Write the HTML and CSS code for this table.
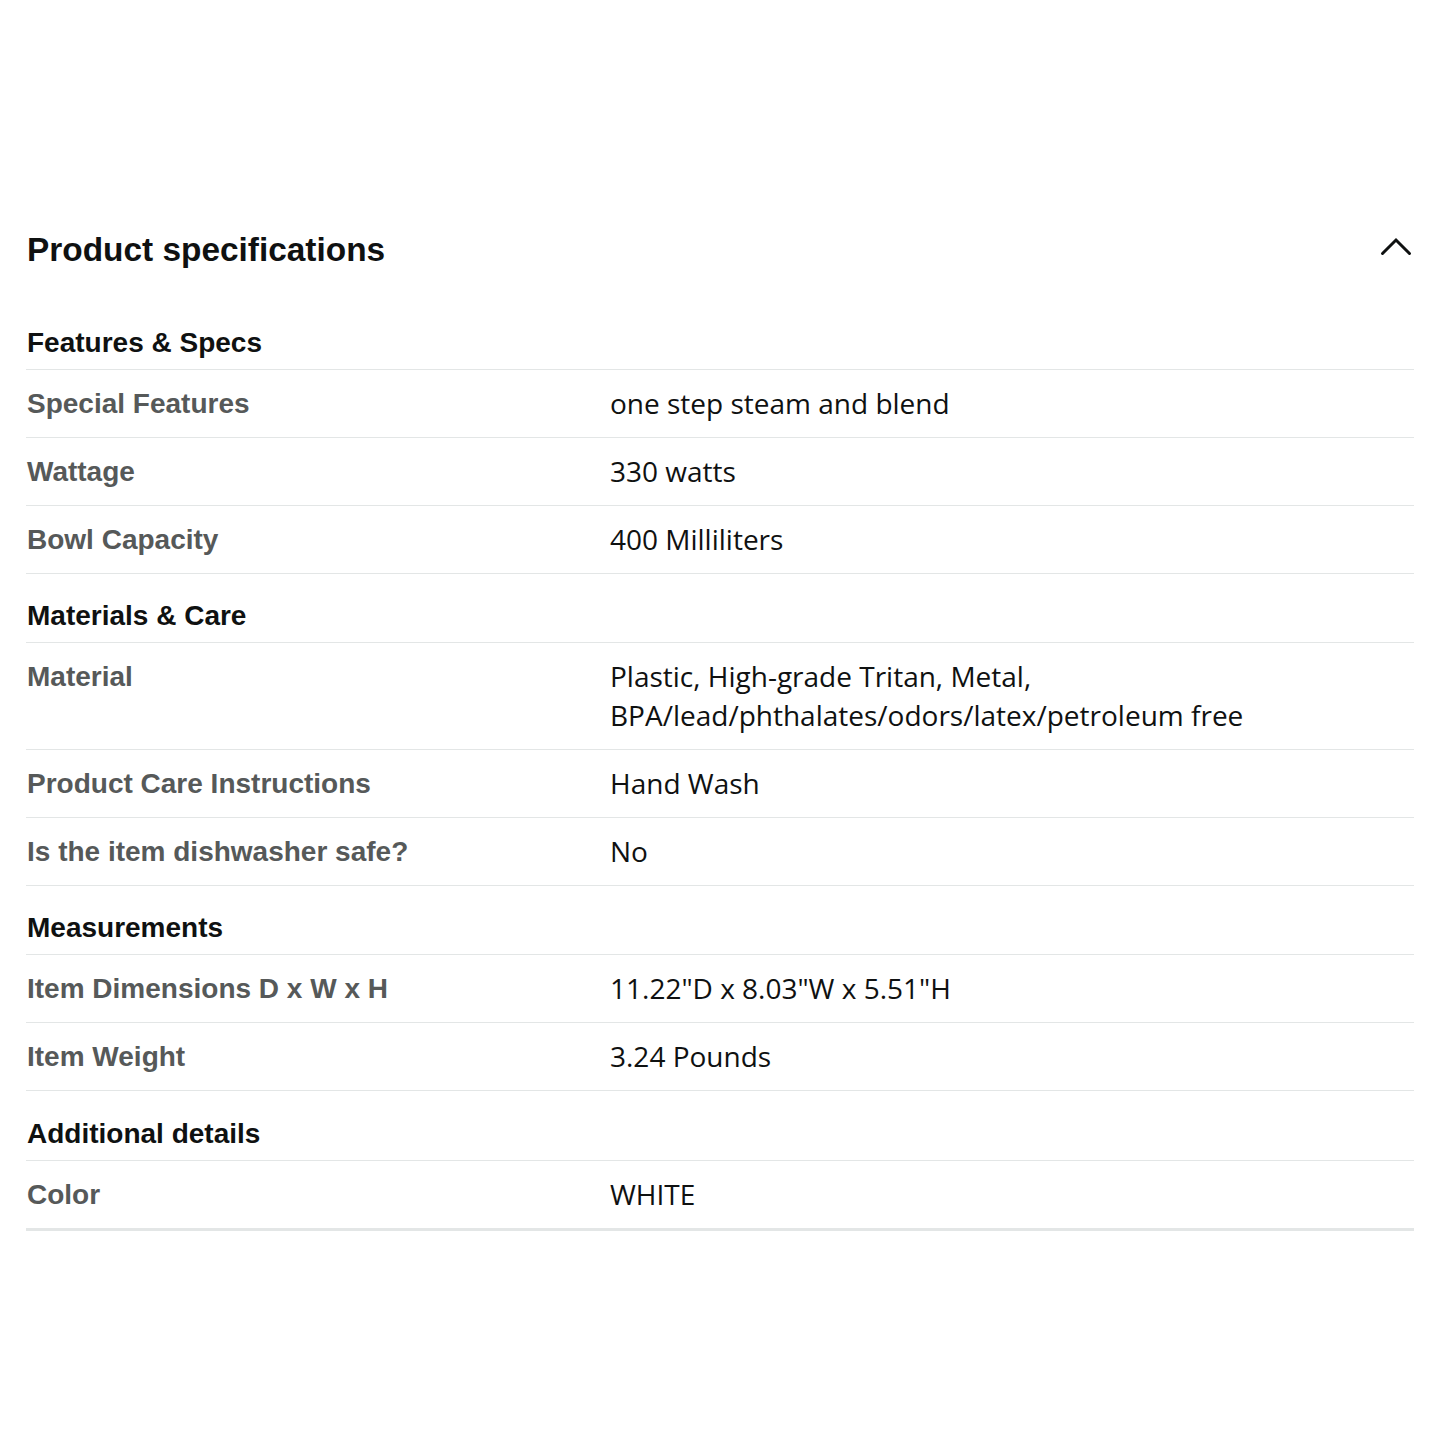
FILE: index.html
```html
<!DOCTYPE html>
<html lang="en">
<head>
<meta charset="utf-8">
<title>Product specifications</title>
<link rel="stylesheet" href="styles.css">
</head>
<body>
<div class="page">
  <div class="title-row">
    <h2 class="title">Product specifications</h2>
    <svg class="chevron" width="32" height="20" viewBox="0 0 32 20" aria-hidden="true">
      <polyline points="2.5,16.5 16,3 29.5,16.5" fill="none" stroke="#0F1111" stroke-width="3" stroke-linecap="round" stroke-linejoin="miter"/>
    </svg>
  </div>
  <div class="specs">
    <div class="row head">Features &amp; Specs</div>
    <div class="row"><div class="label">Special Features</div><div class="value">one step steam and blend</div></div>
    <div class="row"><div class="label">Wattage</div><div class="value">330 watts</div></div>
    <div class="row"><div class="label">Bowl Capacity</div><div class="value">400 Milliliters</div></div>
    <div class="row head">Materials &amp; Care</div>
    <div class="row"><div class="label">Material</div><div class="value">Plastic, High-grade Tritan, Metal,<br>BPA/lead/phthalates/odors/latex/petroleum free</div></div>
    <div class="row"><div class="label">Product Care Instructions</div><div class="value">Hand Wash</div></div>
    <div class="row"><div class="label">Is the item dishwasher safe?</div><div class="value">No</div></div>
    <div class="row head">Measurements</div>
    <div class="row"><div class="label">Item Dimensions D x W x H</div><div class="value">11.22"D x 8.03"W x 5.51"H</div></div>
    <div class="row"><div class="label">Item Weight</div><div class="value">3.24 Pounds</div></div>
    <div class="row head tall">Additional details</div>
    <div class="row last"><div class="label">Color</div><div class="value">WHITE</div></div>
  </div>
</div>
</body>
</html>
```
FILE: styles.css
```css
html, body {
  margin: 0;
  padding: 0;
  background: #ffffff;
}
body {
  font-family: "Liberation Sans", Arial, sans-serif;
  color: #0F1111;
}
.page {
  padding: 228px 26px 0 26px;
}
.title-row {
  display: flex;
  justify-content: space-between;
  align-items: center;
  height: 44px;
  margin-bottom: 29px;
}
.title {
  margin: 0;
  font-size: 33.4px;
  line-height: 44px;
  font-weight: 700;
  color: #0F1111;
  padding-left: 1px;
}
.chevron {
  margin-right: 2px;
  margin-top: -6px;
}
.specs {
  display: flex;
  flex-direction: column;
}
.row {
  display: flex;
  padding: 14px 0 14px 1px;
  border-bottom: 1px solid #e3e6e6;
  font-size: 28px;
  line-height: 39px;
}
.row.head {
  padding-top: 22px;
  padding-bottom: 7px;
  font-weight: 700;
  color: #0F1111;
}
.row.head.tall {
  padding-top: 23px;
}
.row.last {
  border-bottom: 3px solid #e3e6e6;
}
.label {
  width: 583px;
  flex: none;
  font-weight: 700;
  color: #565959;
}
.value {
  flex: 1;
  font-family: "Open Sans", "Liberation Sans", sans-serif;
  font-size: 28px;
  color: #0F1111;
}
```
